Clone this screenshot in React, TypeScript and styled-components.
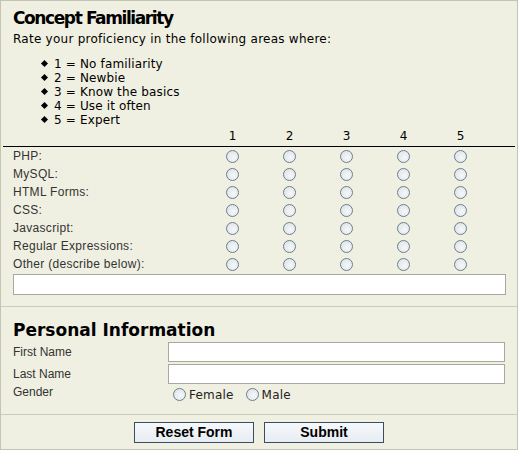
import styled, { createGlobalStyle } from "styled-components";

const Global = createGlobalStyle`
  html, body { margin: 0; padding: 0; background: #f0f0e2; }
  * { box-sizing: border-box; }
`;

const Frame = styled.form`
  width: 518px;
  height: 450px;
  border: 1px solid #c4c4b2;
  background: #f0f0e2;
  padding: 0 2px;
  color: #000;
  font-family: "DejaVu Sans", Verdana, sans-serif;
  display: flex;
  flex-direction: column;
`;

const Section = styled.div<{ $top?: number }>`
  padding: ${(p) => p.$top ?? 7}px 10px 0;
`;

const Title = styled.h2<{ $tight?: boolean }>`
  margin: 0;
  font: 700 17px/20px "DejaVu Sans", Verdana, sans-serif;
  letter-spacing: ${(p) => (p.$tight ? "-1.4px" : "0")};
`;

const Intro = styled.p`
  margin: 4px 0 0;
  font: 400 12px/15px "DejaVu Sans", Verdana, sans-serif;
  letter-spacing: 0.25px;
`;

const Scale = styled.ul`
  margin: 10px 0 0;
  padding-left: 41px;
  font: 400 12px/14px "DejaVu Sans", Verdana, sans-serif;
  letter-spacing: 0.15px;
  li { list-style: none; position: relative; }
  li::before {
    content: "";
    position: absolute;
    left: -12px;
    top: 4px;
    width: 5px;
    height: 5px;
    background: #000;
    transform: rotate(45deg);
  }
`;

const Grid = styled.div`
  display: grid;
  grid-template-columns: 201px repeat(5, 57px) 1fr;
  grid-auto-rows: 18px;
  margin-top: 2px;
`;

const HeadCell = styled.div`
  height: 18px;
  border-bottom: 1px solid #000;
  text-align: center;
  font: 400 12px/14px "DejaVu Sans", Verdana, sans-serif;
`;

const RowLabel = styled.label`
  padding-left: 10px;
  font: 400 12px/18px "Liberation Sans", Arial, sans-serif;
  color: #333;
  letter-spacing: 0.3px;
`;

const Cell = styled.div`
  display: flex;
  align-items: center;
  justify-content: center;
`;

const Radio = styled.input.attrs({ type: "radio" })`
  appearance: none;
  margin: 0;
  width: 13px;
  height: 13px;
  border-radius: 50%;
  border: 1px solid #6a7e8e;
  background: radial-gradient(circle at 60% 60%, #f6f8f9 0%, #e2e7eb 70%, #d2d9de 100%);
`;

const Wide = styled.input.attrs({ type: "text" })`
  display: block;
  width: 493px;
  height: 21px;
  margin: 1px 0 0 10px;
  border: 1px solid #a8a8a0;
  background: #fff;
`;

const Rule = styled.hr<{ $top: number }>`
  margin: ${(p) => p.$top}px -2px 0;
  border: 0;
  border-top: 1px solid #cbcbba;
  height: 0;
`;

const FieldRow = styled.div`
  display: grid;
  grid-template-columns: 155px 1fr;
  align-items: center;
  height: 22px;
`;

const GenderRow = styled(FieldRow)`
  align-items: start;
  height: 26px;
`;

const FieldLabel = styled.label`
  font: 400 12px/14px "Liberation Sans", Arial, sans-serif;
  color: #333;
`;

const Field = styled.input.attrs({ type: "text" })`
  width: 337px;
  height: 20px;
  border: 1px solid #a8a8a0;
  background: #fff;
`;

const Options = styled.div`
  display: flex;
  gap: 12px;
  padding: 2px 0 0 5px;
`;

const Option = styled.label`
  display: flex;
  align-items: center;
  gap: 3px;
  font: 400 12px/16px "DejaVu Sans", Verdana, sans-serif;
  letter-spacing: 0.2px;
  color: #222;
  input { margin-top: -1px; }
`;

const Buttons = styled.div`
  display: flex;
  justify-content: center;
  gap: 10px;
  padding-top: 7px;
`;

const Button = styled.button`
  width: 120px;
  height: 21px;
  padding: 0;
  border: 1px solid #3a4e62;
  background: linear-gradient(#f6f8fb, #e6ecf2);
  font: 700 14px/19px "Liberation Sans", Arial, sans-serif;
  color: #000;
`;

const skills = [
  "PHP:",
  "MySQL:",
  "HTML Forms:",
  "CSS:",
  "Javascript:",
  "Regular Expressions:",
  "Other (describe below):",
];

const levels = [1, 2, 3, 4, 5];

export default function App() {
  return (
    <>
      <Global />
      <Frame onSubmit={(e) => e.preventDefault()}>
        <Section>
          <Title $tight>Concept Familiarity</Title>
          <Intro>Rate your proficiency in the following areas where:</Intro>
          <Scale>
            <li>1 = No familiarity</li>
            <li>2 = Newbie</li>
            <li>3 = Know the basics</li>
            <li>4 = Use it often</li>
            <li>5 = Expert</li>
          </Scale>
        </Section>
        <Grid>
          <HeadCell />
          {levels.map((n) => (
            <HeadCell key={n}>{n}</HeadCell>
          ))}
          <HeadCell />
          {skills.map((s, i) => [
            <RowLabel key={s}>{s}</RowLabel>,
            ...levels.map((n) => (
              <Cell key={s + n}>
                <Radio name={"skill" + i} value={n} />
              </Cell>
            )),
            <div key={s + "end"} />,
          ])}
        </Grid>
        <Wide />
        <Rule $top={11} />
        <Section $top={13}>
          <Title>Personal Information</Title>
          <FieldRow style={{ marginTop: 1 }}>
            <FieldLabel>First Name</FieldLabel>
            <Field />
          </FieldRow>
          <FieldRow>
            <FieldLabel>Last Name</FieldLabel>
            <Field />
          </FieldRow>
          <GenderRow>
            <FieldLabel>Gender</FieldLabel>
            <Options>
              <Option>
                <Radio name="gender" value="f" />
                Female
              </Option>
              <Option>
                <Radio name="gender" value="m" />
                Male
              </Option>
            </Options>
          </GenderRow>
        </Section>
        <Rule $top={3} />
        <Buttons>
          <Button type="reset">Reset Form</Button>
          <Button type="submit">Submit</Button>
        </Buttons>
      </Frame>
    </>
  );
}
